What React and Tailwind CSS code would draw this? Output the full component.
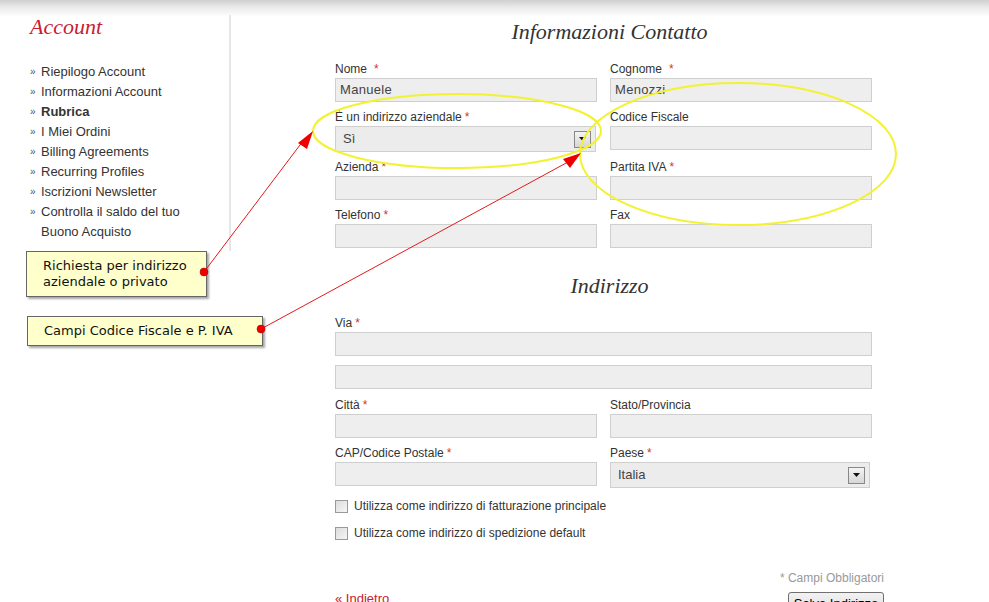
import React from 'react';

const sans = { fontFamily: '"Liberation Sans", Arial, sans-serif' };
const serif = { fontFamily: '"Liberation Serif", "Times New Roman", serif' };
const callout = { fontFamily: '"DejaVu Sans", Verdana, sans-serif' };

const navItems = [
  'Riepilogo Account',
  'Informazioni Account',
  'Rubrica',
  'I Miei Ordini',
  'Billing Agreements',
  'Recurring Profiles',
  'Iscrizioni Newsletter',
  'Controlla il saldo del tuo',
];

function Label({ text, req, wide }) {
  return (
    <div className="h-4 text-[12px] leading-4 text-[#333] whitespace-nowrap">
      {text}
      {req && <span className={`text-[#d8312f] ${wide ? 'ml-[7px]' : 'ml-[3px]'}`}>*</span>}
    </div>
  );
}

function Input({ value = '', w = 'w-[262px]' }) {
  return (
    <div className={`mt-px h-6 ${w} border border-[#cfcfcf] bg-[#eeeeee] pl-1 text-[13px] leading-[22px] text-[#444] tracking-[0.3px]`}>
      {value}
    </div>
  );
}

function Select({ value, w = 'w-[261px]' }) {
  return (
    <div className={`mt-px h-[26px] ${w} flex items-center justify-between border border-[#cfcfcf] bg-[#ececec] pl-[7px] pr-1 text-[13px] text-[#444]`}>
      <span>{value}</span>
      <span className="flex h-[17px] w-[17px] items-center justify-center border border-[#888] bg-[linear-gradient(to_bottom,#f4f4f4,#d6d6d6)]">
        <svg width="7" height="4" viewBox="0 0 7 4"><path d="M0 0h7L3.5 4z" fill="#111" /></svg>
      </span>
    </div>
  );
}

function Field({ label, req, wide, children }) {
  return (
    <div className="flex flex-col">
      <Label text={label} req={req} wide={wide} />
      {children}
    </div>
  );
}

function Check({ text }) {
  return (
    <div className="flex h-5 items-center gap-[6px] text-[12px] text-[#333]">
      <span className="h-[13px] w-[13px] border border-[#9a9a9a] bg-[linear-gradient(135deg,#dcdcdc,#f6f6f6)]" />
      <span>{text}</span>
    </div>
  );
}

export default function App() {
  return (
    <div className="relative h-[602px] w-[989px] overflow-hidden bg-white bg-[linear-gradient(to_bottom,#cfcfcf_0px,#ececec_8px,#ffffff_17px)]" style={sans}>
      <div className="flex">
        {/* Sidebar */}
        <aside className="mt-[15px] h-[236px] w-[231px] shrink-0 border-r-2 border-[#e6e6e6] pl-[30px]">
          <h1 className="-mt-[2px] text-[22px] leading-7 italic text-[#c8202f]" style={serif}>Account</h1>
          <ul className="mt-[21px] text-[13px] leading-5 text-[#333]">
            {navItems.map((item) => (
              <li key={item} className="flex">
                <span className="w-[11px] text-[10px] text-[#555]">»</span>
                <span className={item === 'Rubrica' ? 'font-bold' : ''}>{item}</span>
              </li>
            ))}
            <li className="pl-[11px]">Buono Acquisto</li>
          </ul>
        </aside>

        {/* Main form */}
        <main className="pl-[104px] pt-[18px]">
          <div className="w-[549px]">
            <h2 className="text-center text-[22px] leading-7 italic text-[#333]" style={serif}>Informazioni Contatto</h2>

            <div className="mt-[15px] grid grid-cols-[275px_274px] gap-y-[7px]">
              <Field label="Nome" req wide><Input value="Manuele" /></Field>
              <Field label="Cognome" req wide><Input value="Menozzi" /></Field>
              <Field label="È un indirizzo aziendale" req><Select value="Sì" /></Field>
              <Field label="Codice Fiscale"><Input /></Field>
              <Field label="Azienda" req><Input /></Field>
              <Field label="Partita IVA" req><Input /></Field>
              <Field label="Telefono" req><Input /></Field>
              <Field label="Fax"><Input /></Field>
            </div>

            <h2 className="mt-[24px] text-center text-[22px] leading-7 italic text-[#333]" style={serif}>Indirizzo</h2>

            <div className="mt-[15px] flex flex-col">
              <Label text="Via" req />
              <Input w="w-[537px]" />
              <div className="mt-2"><Input w="w-[537px]" /></div>
            </div>

            <div className="mt-2 grid grid-cols-[275px_274px] gap-y-[7px]">
              <Field label="Città" req><Input /></Field>
              <Field label="Stato/Provincia"><Input /></Field>
              <Field label="CAP/Codice Postale" req><Input /></Field>
              <Field label="Paese" req><Select value="Italia" w="w-[260px]" /></Field>
            </div>

            <div className="mt-[8px] flex flex-col gap-[7px]">
              <Check text="Utilizza come indirizzo di fatturazione principale" />
              <Check text="Utilizza come indirizzo di spedizione default" />
            </div>

            <p className="mt-[27px] text-right text-[12px] leading-4 text-[#999]">* Campi Obbligatori</p>
            <div className="mt-[6px] flex items-start justify-between">
              <a className="-mt-px text-[13px] leading-4 text-[#c8202f]">« Indietro</a>
              <button className="h-[23px] w-[96px] rounded-[3px] border border-[#707070] bg-[linear-gradient(to_bottom,#f2f2f2,#dddddd)] text-[13px] text-black">Salva Indirizzo</button>
            </div>
          </div>
        </main>
      </div>

      {/* Annotation callouts */}
      <div className="absolute left-[26px] top-[251px] flex h-[46px] w-[181px] flex-col justify-center border border-[#666] bg-[#ffffcc] pl-[16px] text-[13px] leading-4 text-[#111] shadow-[2px_2px_2px_rgba(0,0,0,0.35)]" style={callout}>
        <span>Richiesta per indirizzo</span>
        <span>aziendale o privato</span>
      </div>
      <div className="absolute left-[27px] top-[316px] flex h-[30px] w-[236px] items-center border border-[#666] bg-[#ffffcc] pl-[16px] text-[13px] text-[#111] shadow-[2px_2px_2px_rgba(0,0,0,0.35)]" style={callout}>
        Campi Codice Fiscale e P. IVA
      </div>

      <svg className="pointer-events-none absolute inset-0" width="989" height="602">
        <ellipse cx="457" cy="131" rx="144" ry="37" fill="none" stroke="#f2f230" strokeWidth="2" />
        <ellipse cx="738" cy="154" rx="158" ry="71" fill="none" stroke="#f2f230" strokeWidth="2" />
        <line x1="204" y1="272" x2="303" y2="141" stroke="#e21a1a" strokeWidth="1" />
        <polygon points="313,131 298,143 307,149" fill="#ee0000" />
        <line x1="261" y1="329" x2="568" y2="162" stroke="#e21a1a" strokeWidth="1" />
        <polygon points="581,153 563,159 570,168" fill="#ee0000" />
        <circle cx="204" cy="272" r="4" fill="#ee0000" stroke="#a00" strokeWidth="0.5" />
        <circle cx="261" cy="329" r="4" fill="#ee0000" stroke="#a00" strokeWidth="0.5" />
      </svg>
    </div>
  );
}
